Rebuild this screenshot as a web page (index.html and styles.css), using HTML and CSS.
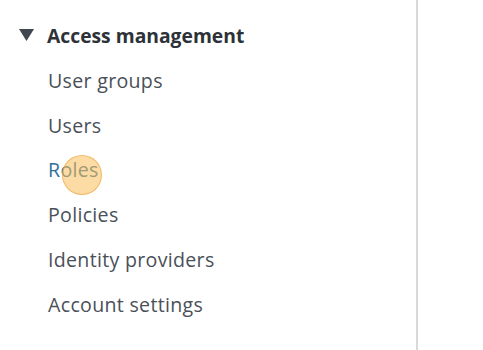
FILE: index.html
```html
<!DOCTYPE html>
<html lang="en">
<head>
    <meta charset="UTF-8">
    <meta name="viewport" content="width=device-width, initial-scale=1.0">
    <title>Access management</title>
    <link rel="stylesheet" href="styles.css">
</head>
<body>
    <div class="layout">
        <nav class="sidenav">
            <div class="section-title">
                <svg class="caret" width="15" height="12" viewBox="0 0 15 12"><polygon points="0,0 15,0 7.5,12" fill="#414750"/></svg>
                <span>Access management</span>
            </div>
            <ul class="nav-list">
                <li><a href="#">User groups</a></li>
                <li><a href="#">Users</a></li>
                <li><a href="#" class="hover">Roles<span class="click-dot"></span></a></li>
                <li><a href="#">Policies</a></li>
                <li><a href="#">Identity providers</a></li>
                <li><a href="#">Account settings</a></li>
            </ul>
        </nav>
        <div class="divider"></div>
        <div class="main"></div>
    </div>
</body>
</html>
```

FILE: styles.css
```css
body {
    margin: 0;
    background-color: #fff;
    font-family: "Open Sans", Arial, sans-serif;
    color: #414750;
}
.layout {
    display: flex;
    height: 350px;
}
.sidenav {
    width: 416px;
    padding-top: 21px;
}
.section-title {
    display: flex;
    align-items: center;
    gap: 13px;
    padding-left: 19px;
    height: 28px;
    font-size: 19.3px;
    font-weight: 700;
    color: #2d3238;
}
.caret {
    display: block;
}
.nav-list {
    list-style: none;
    margin: 0;
    padding: 0 0 0 48px;
}
.nav-list li {
    height: 44.8px;
    display: flex;
    align-items: center;
}
.nav-list li:first-child {
    margin-top: 9px;
}
.nav-list a {
    position: relative;
    font-size: 19.6px;
    letter-spacing: 0.3px;
    color: #4a5058;
    text-decoration: none;
}
.nav-list a.hover {
    color: #2f6f9a;
}
.click-dot {
    position: absolute;
    left: 14px;
    top: -1px;
    width: 38px;
    height: 38px;
    border-radius: 50%;
    background-color: rgba(250, 190, 90, 0.55);
    border: 1px solid rgba(235, 165, 60, 0.6);
}
.divider {
    width: 2px;
    background-color: #d9d9d9;
}
.main {
    flex: 1;
}
```
